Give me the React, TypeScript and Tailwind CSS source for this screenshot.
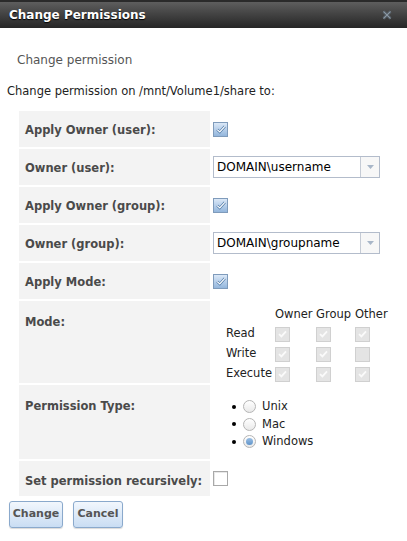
import React from 'react';

const Check = ({ checked = false, disabled = false }: { checked?: boolean; disabled?: boolean }) => {
  if (disabled) {
    return (
      <span className="w-[15px] h-[15px] border border-[#d0d0d0] bg-[#e4e4e4] flex items-center justify-center">
        {checked && (
          <svg width="9" height="8" viewBox="0 0 9 8">
            <path d="M1 4.2 L3.4 6.4 L8 1.4" fill="none" stroke="#fafafa" strokeWidth="1.8" />
          </svg>
        )}
      </span>
    );
  }
  return (
    <span
      className={
        checked
          ? 'w-[15px] h-[15px] border border-[#7f9bbb] bg-gradient-to-b from-[#dbe8f7] to-[#93b6dc] flex items-center justify-center'
          : 'w-[15px] h-[15px] border border-[#a9a9a9] bg-white shadow-[inset_1px_1px_0_#e8e8e8]'
      }
    >
      {checked && (
        <svg width="10" height="9" viewBox="0 0 10 9">
          <path d="M1.2 4.6 L3.8 7 L8.8 1.4" fill="none" stroke="#4f7aa8" strokeWidth="2.6" />
          <path d="M1.2 4.6 L3.8 7 L8.8 1.4" fill="none" stroke="#ffffff" strokeWidth="1.2" />
        </svg>
      )}
    </span>
  );
};

const Radio = ({ selected = false }: { selected?: boolean }) => (
  <span className="w-[13px] h-[13px] rounded-full border border-[#b5b5b5] bg-gradient-to-b from-white to-[#e9e9e9] flex items-center justify-center">
    {selected && <span className="w-[7px] h-[7px] rounded-full bg-gradient-to-b from-[#9cc0e4] to-[#5f93c9]" />}
  </span>
);

const Select = ({ value }: { value: string }) => (
  <div className="w-[167px] h-[22px] border border-[#b3bccb] bg-white flex">
    <span className="flex-1 pl-[3px] leading-[20px] text-[12px] text-black">{value}</span>
    <span className="w-[19px] border-l border-[#c5cbd5] bg-[#f7f7f7] flex items-center justify-center">
      <svg width="7" height="4" viewBox="0 0 7 4">
        <path d="M0 0 H7 L3.5 4 Z" fill="#a8b6c8" />
      </svg>
    </span>
  </div>
);

const Row = ({
  label,
  h,
  pt,
  children,
  top = false,
}: {
  label: string;
  h: number;
  pt: number;
  children: React.ReactNode;
  top?: boolean;
}) => (
  <div className="flex" style={{ height: h }}>
    <div className="w-[191px] bg-[#f3f3f3] pl-[6px] font-bold text-[11.5px] text-[#4a4a4a]" style={{ paddingTop: pt }}>
      {label}
    </div>
    <div className={top ? 'pl-[3px] flex' : 'pl-[3px] flex items-center'}>{children}</div>
  </div>
);

const modeRows: { name: string; vals: boolean[] }[] = [
  { name: 'Read', vals: [true, true, true] },
  { name: 'Write', vals: [true, true, false] },
  { name: 'Execute', vals: [true, true, true] },
];

export default function App() {
  return (
    <div className="w-[407px] h-[541px] bg-white overflow-hidden font-['DejaVu_Sans',sans-serif] text-[11px] text-[#222]">
      <div className="h-[28px] border-t-2 border-[#2a2a2a] bg-gradient-to-b from-[#5e5e5e] to-[#262626] flex items-center justify-between pl-[9px] pr-[15px]">
        <span className="text-white font-bold text-[12px] [text-shadow:0_1px_1px_#000]">Change Permissions</span>
        <svg width="10" height="10" viewBox="0 0 10 10">
          <path d="M1.5 1.5 L8.5 8.5 M8.5 1.5 L1.5 8.5" stroke="#5f6a74" strokeWidth="2.6" />
          <path d="M1.5 1.5 L8.5 8.5 M8.5 1.5 L1.5 8.5" stroke="#8a96a1" strokeWidth="1" />
        </svg>
      </div>

      <div className="pt-[24px] pl-[17px] leading-[16px] text-[12px] text-[#555]">Change permission</div>
      <div className="mt-[15px] pl-[7px] leading-[16px] text-[11.5px]">Change permission on /mnt/Volume1/share to:</div>

      <div className="mt-[12px] pl-[19px] flex flex-col gap-[2px]">
        <Row label="Apply Owner (user):" h={36} pt={11}>
          <Check checked />
        </Row>
        <Row label="Owner (user):" h={36} pt={11}>
          <Select value="DOMAIN\username" />
        </Row>
        <Row label="Apply Owner (group):" h={36} pt={11}>
          <Check checked />
        </Row>
        <Row label="Owner (group):" h={36} pt={11}>
          <Select value="DOMAIN\groupname" />
        </Row>
        <Row label="Apply Mode:" h={36} pt={11}>
          <Check checked />
        </Row>
        <Row label="Mode:" h={82} pt={13} top>
          <div className="pt-[5px] pl-[13px] text-[11.5px]">
            <div className="flex pl-[49px] h-[16px] leading-[16px]">
              <span className="w-[41px]">Owner</span>
              <span className="w-[39px]">Group</span>
              <span>Other</span>
            </div>
            {modeRows.map((r) => (
              <div key={r.name} className="flex items-center h-[20px] pt-[4px]">
                <span className="w-[49px]">{r.name}</span>
                <span className="w-[41px]"><Check checked={r.vals[0]} disabled /></span>
                <span className="w-[39px]"><Check checked={r.vals[1]} disabled /></span>
                <Check checked={r.vals[2]} disabled />
              </div>
            ))}
          </div>
        </Row>
        <Row label="Permission Type:" h={74} pt={13} top>
          <ul className="pt-[13px] pl-[19px] text-[11.5px]">
            {['Unix', 'Mac', 'Windows'].map((t) => (
              <li key={t} className="flex items-center h-[17.5px]">
                <span className="w-[4px] h-[4px] rounded-full bg-black mr-[7px]" />
                <Radio selected={t === 'Windows'} />
                <span className="ml-[6px]">{t}</span>
              </li>
            ))}
          </ul>
        </Row>
        <Row label="Set permission recursively:" h={35} pt={12}>
          <Check />
        </Row>
      </div>

      <div className="mt-[5px] pl-[9px] flex gap-[10px]">
        <button className="w-[54px] h-[27px] rounded-[3px] border border-[#8aa9cc] bg-gradient-to-b from-[#f2f7fd] to-[#c9ddf3] shadow-[0_1px_1px_rgba(0,0,0,0.15)] font-bold text-[11px] text-[#555]">
          Change
        </button>
        <button className="w-[50px] h-[27px] rounded-[3px] border border-[#8aa9cc] bg-gradient-to-b from-[#f2f7fd] to-[#c9ddf3] shadow-[0_1px_1px_rgba(0,0,0,0.15)] font-bold text-[11px] text-[#555]">
          Cancel
        </button>
      </div>
    </div>
  );
}
